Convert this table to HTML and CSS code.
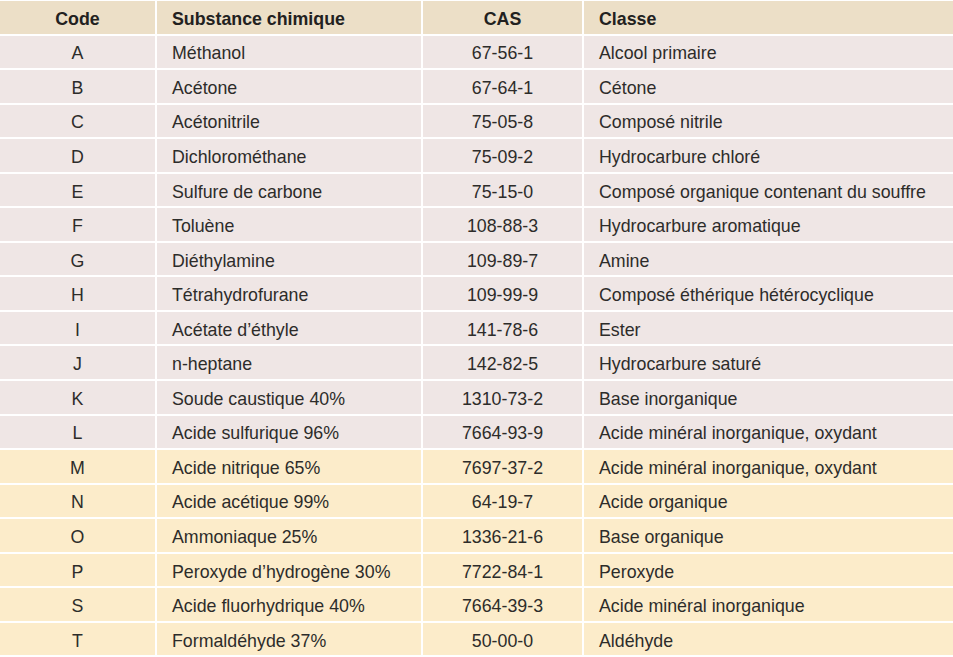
FILE: index.html
```html
<!DOCTYPE html>
<html lang="fr">
<head>
<meta charset="utf-8">
<title>Substances chimiques</title>
<link rel="stylesheet" href="styles.css">
</head>
<body>
<table class="chem">
  <colgroup>
    <col class="c-code"><col class="c-sub"><col class="c-cas"><col class="c-class">
  </colgroup>
  <thead>
    <tr><th class="center">Code</th><th>Substance chimique</th><th class="center">CAS</th><th>Classe</th></tr>
  </thead>
  <tbody>
    <tr class="pink"><td class="center">A</td><td>Méthanol</td><td class="center">67-56-1</td><td>Alcool primaire</td></tr>
    <tr class="pink"><td class="center">B</td><td>Acétone</td><td class="center">67-64-1</td><td>Cétone</td></tr>
    <tr class="pink"><td class="center">C</td><td>Acétonitrile</td><td class="center">75-05-8</td><td>Composé nitrile</td></tr>
    <tr class="pink"><td class="center">D</td><td>Dichlorométhane</td><td class="center">75-09-2</td><td>Hydrocarbure chloré</td></tr>
    <tr class="pink"><td class="center">E</td><td>Sulfure de carbone</td><td class="center">75-15-0</td><td>Composé organique contenant du souffre</td></tr>
    <tr class="pink"><td class="center">F</td><td>Toluène</td><td class="center">108-88-3</td><td>Hydrocarbure aromatique</td></tr>
    <tr class="pink"><td class="center">G</td><td>Diéthylamine</td><td class="center">109-89-7</td><td>Amine</td></tr>
    <tr class="pink"><td class="center">H</td><td>Tétrahydrofurane</td><td class="center">109-99-9</td><td>Composé éthérique hétérocyclique</td></tr>
    <tr class="pink"><td class="center">I</td><td>Acétate d’éthyle</td><td class="center">141-78-6</td><td>Ester</td></tr>
    <tr class="pink"><td class="center">J</td><td>n-heptane</td><td class="center">142-82-5</td><td>Hydrocarbure saturé</td></tr>
    <tr class="pink"><td class="center">K</td><td>Soude caustique 40%</td><td class="center">1310-73-2</td><td>Base inorganique</td></tr>
    <tr class="pink"><td class="center">L</td><td>Acide sulfurique 96%</td><td class="center">7664-93-9</td><td>Acide minéral inorganique, oxydant</td></tr>
    <tr class="yellow"><td class="center">M</td><td>Acide nitrique 65%</td><td class="center">7697-37-2</td><td>Acide minéral inorganique, oxydant</td></tr>
    <tr class="yellow"><td class="center">N</td><td>Acide acétique 99%</td><td class="center">64-19-7</td><td>Acide organique</td></tr>
    <tr class="yellow"><td class="center">O</td><td>Ammoniaque 25%</td><td class="center">1336-21-6</td><td>Base organique</td></tr>
    <tr class="yellow"><td class="center">P</td><td>Peroxyde d’hydrogène 30%</td><td class="center">7722-84-1</td><td>Peroxyde</td></tr>
    <tr class="yellow"><td class="center">S</td><td>Acide fluorhydrique 40%</td><td class="center">7664-39-3</td><td>Acide minéral inorganique</td></tr>
    <tr class="yellow"><td class="center">T</td><td>Formaldéhyde 37%</td><td class="center">50-00-0</td><td>Aldéhyde</td></tr>
  </tbody>
</table>
</body>
</html>
```
FILE: styles.css
```css
html, body {
  margin: 0;
  padding: 0;
  background: #ffffff;
}
body {
  font-family: "Liberation Sans", Arial, Helvetica, sans-serif;
  font-size: 17.8px;
  color: #2d2c2a;
}
.chem {
  width: 953px;
  margin-top: 1px;
  border-collapse: collapse;
  table-layout: fixed;
}
.c-code { width: 156px; }
.c-sub { width: 266px; }
.c-cas { width: 161px; }
.c-class { width: 370px; }
.chem th, .chem td {
  height: 34.56px;
  padding: 3px 0 0 15px;
  border-left: 2px solid #ffffff;
  border-bottom: 2px solid #ffffff;
  text-align: left;
  vertical-align: middle;
  white-space: nowrap;
  box-sizing: border-box;
  line-height: 20px;
}
.chem th {
  height: 33.56px;
  font-weight: bold;
  background: #ecdfc7;
  color: #222120;
}
.chem th:first-child, .chem td:first-child { border-left: none; }
.chem .center { text-align: center; padding-left: 0; }
.pink td { background: #efe6e5; }
.yellow td { background: #fcecca; }
```
